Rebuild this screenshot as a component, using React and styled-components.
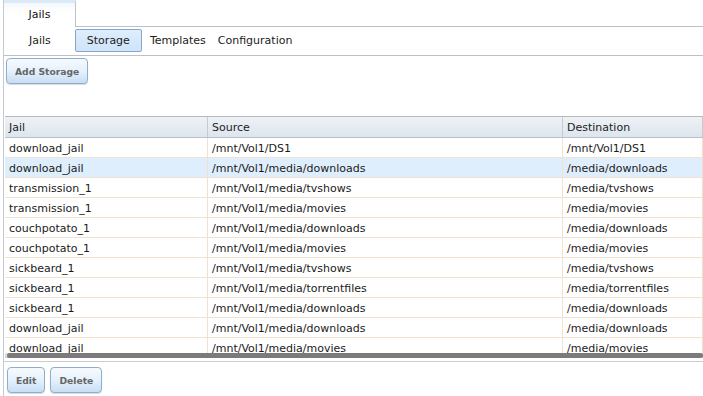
import React from "react"
import styled, { createGlobalStyle } from "styled-components"

const rows = [
  ["download_jail", "/mnt/Vol1/DS1", "/mnt/Vol1/DS1"],
  ["download_jail", "/mnt/Vol1/media/downloads", "/media/downloads"],
  ["transmission_1", "/mnt/Vol1/media/tvshows", "/media/tvshows"],
  ["transmission_1", "/mnt/Vol1/media/movies", "/media/movies"],
  ["couchpotato_1", "/mnt/Vol1/media/downloads", "/media/downloads"],
  ["couchpotato_1", "/mnt/Vol1/media/movies", "/media/movies"],
  ["sickbeard_1", "/mnt/Vol1/media/tvshows", "/media/tvshows"],
  ["sickbeard_1", "/mnt/Vol1/media/torrentfiles", "/media/torrentfiles"],
  ["sickbeard_1", "/mnt/Vol1/media/downloads", "/media/downloads"],
  ["download_jail", "/mnt/Vol1/media/downloads", "/media/downloads"],
  ["download_jail", "/mnt/Vol1/media/movies", "/media/movies"],
]

export default function App() {
  return (
    <>
      <GlobalStyle />
      <Page>
        <TabStrip>
          <Tab>Jails</Tab>
          <TabFiller />
        </TabStrip>
        <SubTabs>
          <SubTab>Jails</SubTab>
          <SubTab active>Storage</SubTab>
          <SubTab>Templates</SubTab>
          <SubTab>Configuration</SubTab>
        </SubTabs>
        <Toolbar>
          <Button>Add Storage</Button>
        </Toolbar>
        <Grid>
          <HeaderRow>
            <HeadCell w={203}>Jail</HeadCell>
            <HeadCell w={355}>Source</HeadCell>
            <HeadCell>Destination</HeadCell>
          </HeaderRow>
          <Body>
            {rows.map((r, i) => (
              <Row key={i} hover={i === 1}>
                <Cell w={203}>{r[0]}</Cell>
                <Cell w={355}>{r[1]}</Cell>
                <Cell>{r[2]}</Cell>
              </Row>
            ))}
            <ScrollTrack>
              <ScrollThumb />
            </ScrollTrack>
          </Body>
        </Grid>
        <BottomBar>
          <Button>Edit</Button>
          <Button>Delete</Button>
        </BottomBar>
      </Page>
    </>
  )
}

const GlobalStyle = createGlobalStyle`
  html, body {
    margin: 0;
    padding: 0;
    background: #fff;
    overflow: hidden;
  }
  body {
    font-family: "DejaVu Sans", Verdana, sans-serif;
    font-size: 11px;
    color: #1a1a1a;
  }
`

const Page = styled.div`
  margin-left: 3px;
  height: 396px;
  border-left: 1px solid #c3cad2;
  display: flex;
  flex-direction: column;
`

const TabStrip = styled.div`
  display: flex;
  height: 27px;
`

const Tab = styled.div`
  width: 72px;
  height: 27px;
  box-sizing: border-box;
  border-right: 1px solid #b9c2cc;
  border-top: 3px solid #dce9f7;
  background: linear-gradient(#f4f8fc, #ffffff 40%);
  display: flex;
  align-items: center;
  justify-content: center;
  padding-bottom: 1px;
  color: #111;
`

const TabFiller = styled.div`
  flex: 1;
  border-bottom: 1px solid #b9c2cc;
`

const SubTabs = styled.div`
  display: flex;
  align-items: center;
  height: 29px;
  box-sizing: border-box;
  padding: 0 0 2px 0;
  border-bottom: 1px solid #b9c2cc;
`

const SubTab = styled.div`
  height: 23px;
  box-sizing: border-box;
  display: flex;
  align-items: center;
  justify-content: center;
  padding: 0 ${(p) => (p.active ? "11px" : "5px")};
  margin-right: ${(p) => (p.active ? "2px" : "0")};
  border: 1px solid ${(p) => (p.active ? "#87a7c7" : "transparent")};
  border-radius: 2px;
  background: ${(p) =>
    p.active ? "linear-gradient(#ddeefd, #cfe4f9)" : "transparent"};
  color: #222;
  &:first-child {
    padding: 0 22px 0 24px;
    margin-right: 1px;
  }
`

const Toolbar = styled.div`
  display: flex;
  padding: 2px 0 0 2px;
  height: 60px;
  box-sizing: border-box;
`

const Button = styled.div`
  height: 26px;
  box-sizing: border-box;
  padding: 0 8px;
  display: flex;
  align-items: center;
  border: 1px solid #8fadcc;
  border-radius: 4px;
  background: linear-gradient(#f6fafe, #e6f1fc 50%, #c8def4);
  box-shadow: 0 1px 1px rgba(0, 0, 0, 0.15);
  font-weight: bold;
  font-size: 9.2px;
  color: #666;
`

const Grid = styled.div`
  margin-left: 1px;
  border-top: 1px solid #b4b9bf;
  display: flex;
  flex-direction: column;
`

const HeaderRow = styled.div`
  display: flex;
  height: 20px;
  background: linear-gradient(#eef2f6, #dde5ee);
  border-bottom: 1px solid #b9c0c8;
`

const HeadCell = styled.div`
  ${(p) => (p.w ? `width: ${p.w}px;` : "flex: 1;")}
  flex-shrink: 0;
  box-sizing: border-box;
  padding: 1px 0 0 4px;
  display: flex;
  align-items: center;
  border-right: 1px solid #c4cbd2;
  color: #222;
`

const Body = styled.div`
  position: relative;
  display: flex;
  flex-direction: column;
`

const Row = styled.div`
  display: flex;
  height: 20px;
  box-sizing: border-box;
  border-bottom: 1px solid #f1e2cf;
  background: ${(p) => (p.hover ? "#dfeefc" : "#fff")};
`

const Cell = styled.div`
  ${(p) => (p.w ? `width: ${p.w}px;` : "flex: 1;")}
  flex-shrink: 0;
  box-sizing: border-box;
  padding: 1px 0 0 4px;
  display: flex;
  align-items: center;
  border-right: 1px solid #f1e2cf;
  white-space: nowrap;
  overflow: hidden;
`

const ScrollTrack = styled.div`
  position: absolute;
  left: 0;
  right: 0;
  bottom: 0;
  height: 5px;
  background: rgba(160, 160, 160, 0.35);
`

const ScrollThumb = styled.div`
  margin: 0 0 0 2px;
  height: 5px;
  border-radius: 3px;
  background: #7b7b7b;
`

const BottomBar = styled.div`
  display: flex;
  gap: 5px;
  margin-top: 3px;
  padding: 5px 0 0 3px;
  border-top: 1px solid #c9cdd2;
`
